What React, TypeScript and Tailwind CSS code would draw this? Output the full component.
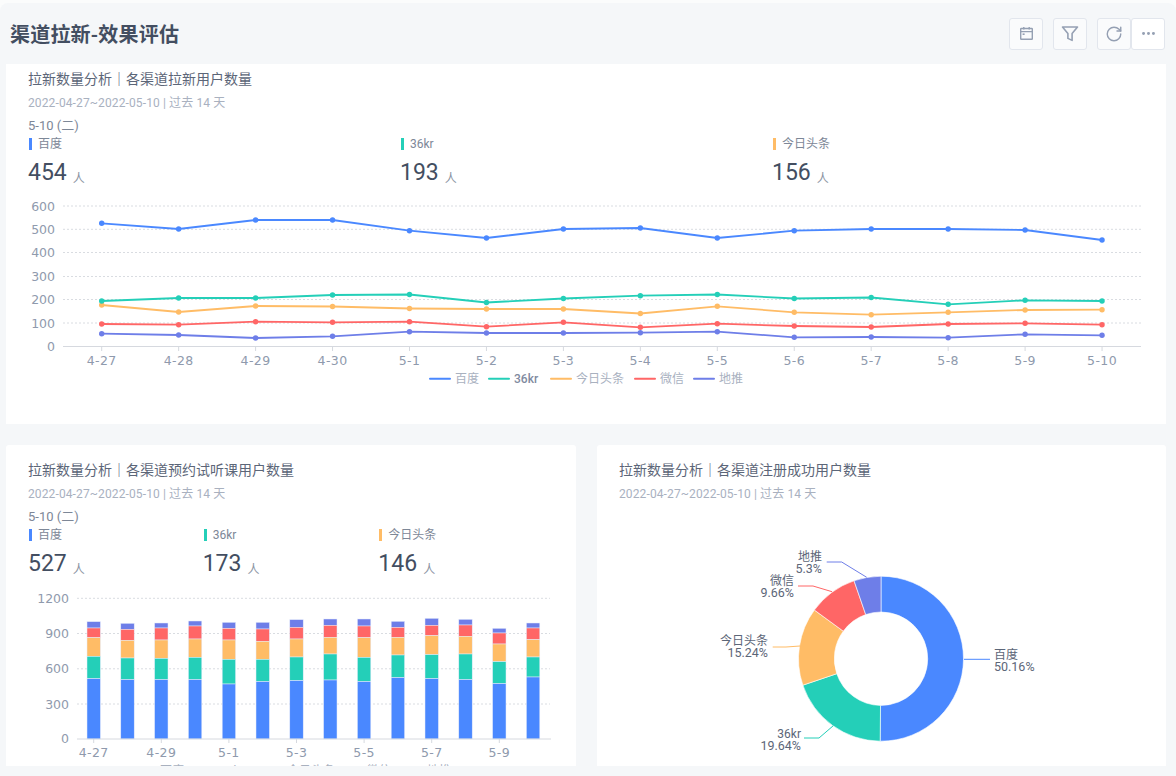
import { MoreHorizontal, RotateCw } from "lucide-react";

const CJK = "font-['Roboto','Noto_Sans_CJK_SC',sans-serif]";

const COLORS = {
  baidu: "#4a88ff",
  kr: "#24cfb8",
  toutiao: "#ffbc66",
  wechat: "#ff6666",
  ground: "#6e7ee8",
};

const DATES = ["4-27", "4-28", "4-29", "4-30", "5-1", "5-2", "5-3", "5-4", "5-5", "5-6", "5-7", "5-8", "5-9", "5-10"];

// y pixel of every point, per channel
const LINES = [
  { color: COLORS.ground, ys: [333.7, 335, 338, 336.3, 331.7, 333, 333, 332.7, 331.7, 337.3, 337, 337.7, 334.3, 335.3] },
  { color: COLORS.wechat, ys: [324, 324.7, 321.7, 322.3, 321.7, 326.7, 322.3, 327.3, 323.7, 326, 327, 324, 323.3, 324.7] },
  { color: COLORS.toutiao, ys: [305, 312, 306, 306.5, 308.5, 309, 309, 313.5, 306.3, 312.3, 314.7, 312.3, 310, 309.7] },
  { color: COLORS.kr, ys: [301, 298, 298, 295, 294.5, 302.5, 298.5, 295.7, 294.5, 298.5, 297.5, 304.3, 300.3, 301] },
  { color: COLORS.baidu, ys: [223.3, 229, 220, 220, 230.7, 238, 229, 228, 238, 230.7, 229, 229, 230, 240] },
];

// stack boundaries of each bar, top to bottom: ground, wechat, toutiao, kr, baidu top
const BARS = [
  [125, 144, 173, 229, 296],
  [130, 148, 181, 234, 299],
  [129, 144, 180, 235, 299],
  [123, 138, 177, 232, 299],
  [127, 145, 180, 238, 312],
  [127, 147, 184, 238, 305],
  [119, 142, 177, 231, 302],
  [117, 136, 172, 222, 300],
  [117, 138, 173, 232, 305],
  [124, 142, 172, 225, 293],
  [115, 136, 167, 224, 296],
  [118, 135, 169, 222, 299],
  [145, 159, 192, 245, 311],
  [129, 144, 179, 231, 291],
];
const BAR_COLORS = [COLORS.ground, COLORS.wechat, COLORS.toutiao, COLORS.kr, COLORS.baidu];

const SLICES = [
  { value: 50.16, color: COLORS.baidu },
  { value: 19.64, color: COLORS.kr },
  { value: 15.24, color: COLORS.toutiao },
  { value: 9.66, color: COLORS.wechat },
  { value: 5.3, color: COLORS.ground },
];

const PIE_LABELS = [
  { name: "百度", pct: "50.16%", x: 994, y: 654, anchor: "start", color: COLORS.baidu, line: "964,659.3 990,659.3" },
  { name: "36kr", pct: "19.64%", x: 801, y: 733, anchor: "end", color: COLORS.kr, line: "833.3,725.7 819,738 804,738" },
  { name: "今日头条", pct: "15.24%", x: 768, y: 640.5, anchor: "end", color: COLORS.toutiao, line: "800,646 786,647 772.7,647" },
  { name: "微信", pct: "9.66%", x: 794, y: 580, anchor: "end", color: COLORS.wechat, line: "832,591.7 813,586 798,586" },
  { name: "地推", pct: "5.3%", x: 822, y: 556.5, anchor: "end", color: COLORS.ground, line: "866.7,577.3 841.7,562 826.7,562" },
];

function donutPath(from: number, to: number) {
  const cx = 881;
  const cy = 658.7;
  const R = 82.5;
  const r = 46.7;
  const a0 = (from / 100) * Math.PI * 2 - Math.PI / 2;
  const a1 = (to / 100) * Math.PI * 2 - Math.PI / 2;
  const large = to - from > 50 ? 1 : 0;
  const p = (rad: number, a: number) => `${cx + rad * Math.cos(a)} ${cy + rad * Math.sin(a)}`;
  return `M${p(R, a0)} A${R} ${R} 0 ${large} 1 ${p(R, a1)} L${p(r, a1)} A${r} ${r} 0 ${large} 0 ${p(r, a0)} Z`;
}

function ToolButton({ children, bare }: { children: React.ReactNode; bare?: boolean }) {
  return (
    <button
      className={`flex h-[32px] w-[34px] items-center justify-center rounded-[3px] border border-[#e2e6ed] text-[#95a0b3] ${
        bare ? "bg-white" : "bg-[#fafbfc]"
      }`}
    >
      {children}
    </button>
  );
}

function Stat({ color, label, value, width }: { color: string; label: string; value: number; width: string }) {
  return (
    <div className={`mt-[2px] ${width}`}>
      <div className="flex h-[14px] items-center">
        <span className="mr-[6px] ml-px h-[12px] w-[3px]" style={{ backgroundColor: color }} />
        <span className="text-[12px] leading-[14px] text-[#7d8797]">{label}</span>
      </div>
      <div className="mt-[7px] flex h-[30px] items-end">
        <span className="text-[23px] leading-[30px] font-normal text-[#434e61]">{value}</span>
        <span className="mb-[1px] ml-[6px] text-[12px] leading-[16px] text-[#8b94a3]">人</span>
      </div>
    </div>
  );
}

function CardHead({ title }: { title: string }) {
  return (
    <>
      <h2 className="text-[14px] leading-[20px] font-normal text-[#5c6678]">{title}</h2>
      <p className="mt-[5px] text-[12px] leading-[18px] tracking-[0.12px] text-[#a9b1bf]">
        2022-04-27~2022-05-10 | 过去 14 天
      </p>
    </>
  );
}

function YAxis({ ticks, x0, x1, textX }: { ticks: { label: string; y: number }[]; x0: number; x1: number; textX: number }) {
  return (
    <>
      {ticks.map((t) => (
        <g key={t.label}>
          {t.label !== "0" && (
            <line x1={x0} x2={x1} y1={t.y} y2={t.y} stroke="#d9dce1" strokeWidth="1" strokeDasharray="2 2" />
          )}
          <text x={textX} y={t.y + 4.5} textAnchor="end" fontSize="12.5" fill="#8f9aad">
            {t.label}
          </text>
        </g>
      ))}
    </>
  );
}

function LineChart() {
  const xs = DATES.map((_, i) => 101.7 + i * 76.95);
  return (
    <svg viewBox="6 190 1160 234" className="mt-[2px] block h-[234px] w-[1160px] font-['DejaVu_Sans',sans-serif]">
      <YAxis
        x0={63}
        x1={1141}
        textX={55}
        ticks={[
          { label: "600", y: 206 },
          { label: "500", y: 229.3 },
          { label: "400", y: 252.5 },
          { label: "300", y: 276.5 },
          { label: "200", y: 299.5 },
          { label: "100", y: 323 },
          { label: "0", y: 346 },
        ]}
      />
      <line x1="63" x2="1141" y1="346.5" y2="346.5" stroke="#d6d9df" />
      {DATES.map((d, i) => (
        <g key={d}>
          <line x1={xs[i]} x2={xs[i]} y1="346.5" y2="351" stroke="#d6d9df" />
          <text x={xs[i]} y="364.5" textAnchor="middle" fontSize="12.5" fill="#8f9aad" letterSpacing="0.4">
            {d}
          </text>
        </g>
      ))}
      {LINES.map((l) => (
        <g key={l.color}>
          <polyline
            points={l.ys.map((y, i) => `${xs[i]},${y}`).join(" ")}
            fill="none"
            stroke={l.color}
            strokeWidth="1.8"
          />
          {l.ys.map((y, i) => (
            <circle key={i} cx={xs[i]} cy={y} r="2.7" fill={l.color} />
          ))}
        </g>
      ))}
      <g fontSize="12" className={CJK} fill="#a9b1bf">
        {[
          { x: 430, color: COLORS.baidu, name: "百度" },
          { x: 489, color: COLORS.kr, name: "36kr", dark: true },
          { x: 551, color: COLORS.toutiao, name: "今日头条" },
          { x: 635, color: COLORS.wechat, name: "微信" },
          { x: 694, color: COLORS.ground, name: "地推" },
        ].map((it) => (
          <g key={it.name}>
            <line x1={it.x} x2={it.x + 20} y1="378.7" y2="378.7" stroke={it.color} strokeWidth="2" strokeLinecap="round" />
            <text
              x={it.x + 25}
              y="383"
              fill={it.dark ? "#7f8aa0" : "#a9b1bf"}
              fontWeight={it.dark ? 500 : 400}
            >
              {it.name}
            </text>
          </g>
        ))}
      </g>
    </svg>
  );
}

function BarChart() {
  return (
    <svg viewBox="6 581 570 185" className="mt-[2px] block h-[185px] w-[570px] font-['DejaVu_Sans',sans-serif]">
      <YAxis
        x0={77}
        x1={550}
        textX={69}
        ticks={[
          { label: "1200", y: 598.3 },
          { label: "900", y: 633.5 },
          { label: "600", y: 668.8 },
          { label: "300", y: 704 },
          { label: "0", y: 738.5 },
        ]}
      />
      {BARS.map((bar, i) => {
        const x = 93.7 + i * 33.8 - 6.7;
        const ys = [...bar, 477].map((v) => 580 + v / 3);
        return (
          <g key={i}>
            {BAR_COLORS.map((c, j) => (
              <rect key={c} x={x} y={ys[j]} width="13.4" height={ys[j + 1] - ys[j]} fill={c} stroke="#e6ecfb" strokeWidth="0.5" />
            ))}
          </g>
        );
      })}
      <line x1="77" x2="551" y1="739" y2="739" stroke="#d6d9df" />
      {DATES.filter((_, i) => i % 2 === 0).map((d, i) => {
        const x = 93.7 + i * 2 * 33.8;
        return (
          <g key={d}>
            <line x1={x} x2={x} y1="739" y2="743" stroke="#d6d9df" />
            <text x={x} y="756.5" textAnchor="middle" fontSize="12.5" fill="#8f9aad" letterSpacing="0.4">
              {d}
            </text>
          </g>
        );
      })}
      {/* legend sits under the fold, only its top shows */}
      <g fontSize="12" className={CJK} fill="#a9b1bf">
        <text x="160" y="775">百度</text>
        <text x="220" y="775">36kr</text>
        <text x="287" y="775">今日头条</text>
        <text x="367" y="775">微信</text>
        <text x="427" y="775">地推</text>
      </g>
    </svg>
  );
}

function DonutChart() {
  let from = 0;
  return (
    <svg viewBox="597 510 569 256" className="mt-[7px] block h-[256px] w-[569px]">
      {SLICES.map((s) => {
        const d = donutPath(from, from + s.value);
        from += s.value;
        return <path key={s.color} d={d} fill={s.color} stroke="#fff" strokeWidth="0.6" />;
      })}
      {PIE_LABELS.map((l) => (
        <g key={l.name}>
          <polyline points={l.line} fill="none" stroke={l.color} strokeWidth="1" />
          <text x={l.x} y={l.y + 4.5} textAnchor={l.anchor as "start" | "end"} fontSize="12" fill="#5c6678" className={CJK}>
            {l.name}
          </text>
          <text x={l.x} y={l.y + 16.5} textAnchor={l.anchor as "start" | "end"} fontSize="12.5" fill="#5c6678" className={CJK}>
            {l.pct}
          </text>
        </g>
      ))}
    </svg>
  );
}

export default function App() {
  return (
    <div className={`h-[776px] w-[1176px] overflow-hidden bg-[#fbfcfc] pt-[3px] ${CJK}`}>
      <div className="flex h-[773px] flex-col rounded-t-[8px] bg-[#f5f7f9]">
        {/* Header */}
        <header className="flex h-[61px] shrink-0 items-center justify-between pr-[11px] pl-[10px]">
          <h1 className="mt-[3px] text-[20px] leading-[28px] font-semibold tracking-[0.2px] text-[#434e61]">
            渠道拉新-效果评估
          </h1>
          <div className="flex items-center">
            <ToolButton>
              <svg width="15" height="15" viewBox="0 0 15 15" fill="none" stroke="#95a0b3" strokeWidth="1.4">
                <rect x="1.7" y="2.5" width="11.6" height="10.8" rx="0.5" />
                <path d="M1.7 5.6h11.6M4.8 1v2.4M10.2 1v2.4" />
                <rect x="3.6" y="7.4" width="2" height="1.6" fill="#95a0b3" stroke="none" />
              </svg>
            </ToolButton>
            <div className="ml-[10px]">
              <ToolButton>
                <svg width="18" height="17" viewBox="0 0 18 17" fill="none" stroke="#95a0b3" strokeWidth="1.6" strokeLinejoin="round">
                  <path d="M1.5 2h15l-5.4 6.4v7l-4.2-2V8.4z" />
                </svg>
              </ToolButton>
            </div>
            <div className="ml-[10px]">
              <ToolButton>
                <RotateCw size={18} strokeWidth={1.9} />
              </ToolButton>
            </div>
            <ToolButton bare>
              <MoreHorizontal size={17} strokeWidth={2.2} />
            </ToolButton>
          </div>
        </header>

        {/* Full width line chart */}
        <section className="mr-[10px] ml-[6px] h-[360px] shrink-0 overflow-hidden bg-white">
          <div className="px-[22px] pt-[5px]">
            <CardHead title="拉新数量分析｜各渠道拉新用户数量" />
            <div className="mt-[5px] text-[13px] leading-[18px] text-[#7d8797]">5-10 (二)</div>
            <div className="flex">
              <Stat color={COLORS.baidu} label="百度" value={454} width="w-[372px]" />
              <Stat color={COLORS.kr} label="36kr" value={193} width="w-[372px]" />
              <Stat color={COLORS.toutiao} label="今日头条" value={156} width="w-[372px]" />
            </div>
          </div>
          <LineChart />
        </section>

        {/* Bottom row */}
        <div className="mt-[21px] mr-[10px] ml-[6px] grid h-[321px] shrink-0 grid-cols-[570px_569px] gap-[21px]">
          <section className="overflow-hidden rounded-t-[3px] bg-white">
            <div className="px-[22px] pt-[15px]">
              <CardHead title="拉新数量分析｜各渠道预约试听课用户数量" />
              <div className="mt-[5px] text-[13px] leading-[18px] text-[#7d8797]">5-10 (二)</div>
              <div className="flex">
                <Stat color={COLORS.baidu} label="百度" value={527} width="w-[175px]" />
                <Stat color={COLORS.kr} label="36kr" value={173} width="w-[176px]" />
                <Stat color={COLORS.toutiao} label="今日头条" value={146} width="w-[176px]" />
              </div>
            </div>
            <BarChart />
          </section>
          <section className="overflow-hidden rounded-t-[3px] bg-white">
            <div className="px-[22px] pt-[15px]">
              <CardHead title="拉新数量分析｜各渠道注册成功用户数量" />
            </div>
            <DonutChart />
          </section>
        </div>
      </div>
    </div>
  );
}
